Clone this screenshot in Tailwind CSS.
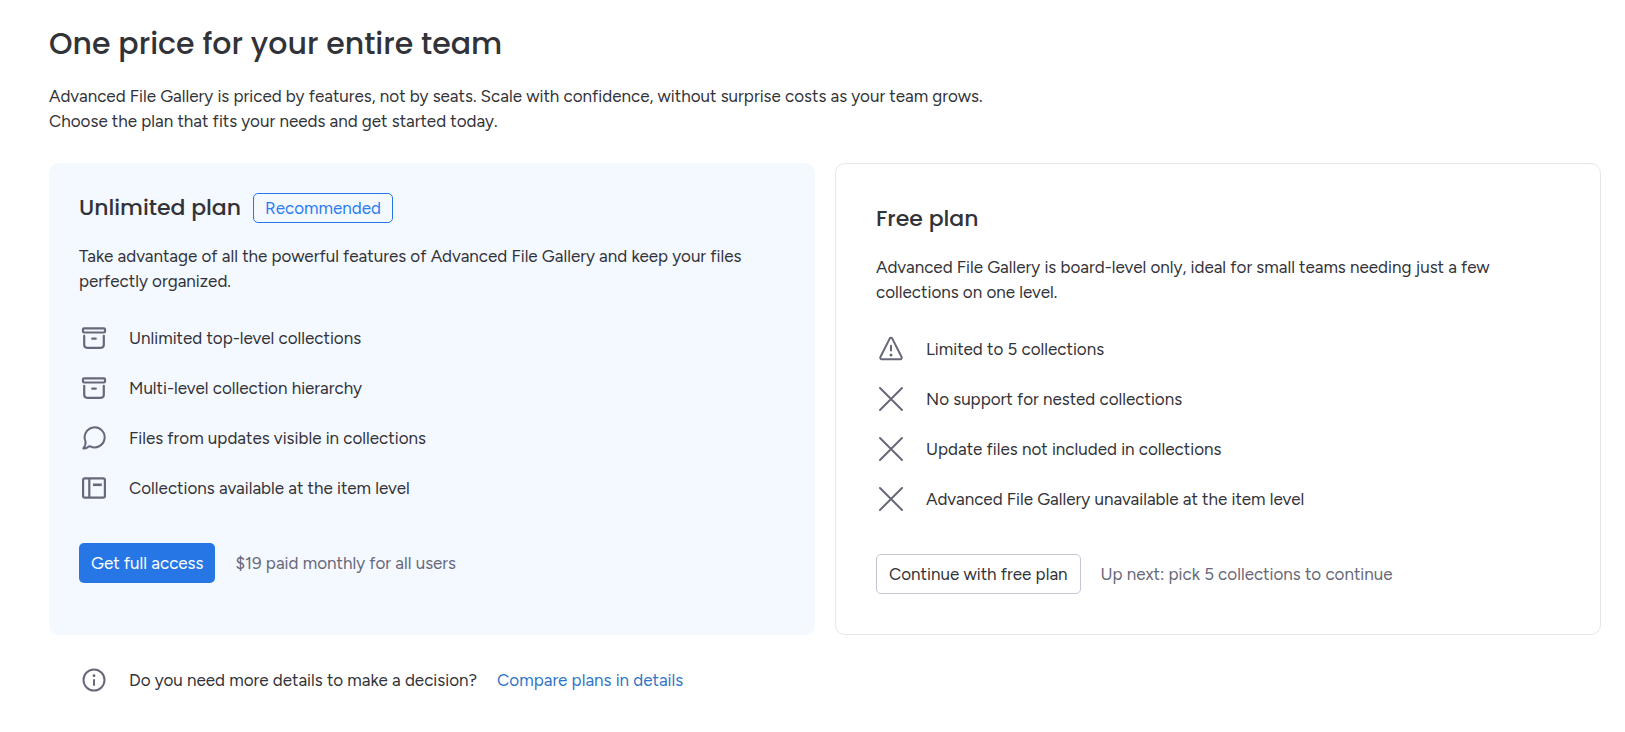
<!DOCTYPE html>
<html lang="en">
<head>
  <meta charset="UTF-8" />
  <meta name="viewport" content="width=device-width, initial-scale=1.0" />
  <title>Advanced File Gallery - Pricing</title>
  <script src="https://cdn.jsdelivr.net/npm/@tailwindcss/browser@4"></script>
</head>
<body class="bg-white font-[Figtree,Lato,sans-serif] text-[17px] leading-[25px] text-[#323338]">
  <!-- icon shapes shared by the lists -->
  <svg class="hidden">
    <symbol id="icon-archive" viewBox="0 0 30 30" stroke-width="2.200">
      <rect x="4" y="5.300" width="22" height="4.200" rx="1" />
      <path d="M5.200 12.800v9a3 3 0 0 0 3 3h13.600a3 3 0 0 0 3-3v-9M13.200 15.700h3.600" />
    </symbol>
    <symbol id="icon-chat" viewBox="0 0 30 30">
      <path d="M6.500 18.400A10 10 0 1 1 11.200 23.300C10 22.900 9.300 23.800 8.500 24.400C7.300 25.200 5.800 25.600 4.300 25.400C6 23.500 6.900 21 6.500 18.400Z" />
    </symbol>
    <symbol id="icon-layout" viewBox="0 0 30 30" stroke-width="2.200">
      <rect x="4.100" y="5.300" width="21.800" height="19.400" rx="1.700" />
      <path d="M10.300 5.300v19.400" />
      <path stroke-width="2.600" d="M14 11.800h8.800" />
    </symbol>
    <symbol id="icon-alert" viewBox="0 0 30 30">
      <path d="M13.700 4.600 4.400 23a1.500 1.500 0 0 0 1.300 2.200h18.600a1.500 1.500 0 0 0 1.300-2.200L16.300 4.600a1.500 1.500 0 0 0-2.600 0ZM15 11.800v4.600" />
      <circle cx="15" cy="20.900" r="1.500" stroke="none" fill="currentColor" />
    </symbol>
    <symbol id="icon-close" viewBox="0 0 30 30">
      <path d="m4 4 22 22M26 4 4 26" />
    </symbol>
    <symbol id="icon-info" viewBox="0 0 30 30">
      <circle cx="15" cy="15" r="10.500" />
      <path d="M15 15v5" />
      <circle cx="15" cy="10.700" r="1.400" stroke="none" fill="currentColor" />
    </symbol>
  </svg>

  <main class="pl-[49px] pr-6 pt-6 pb-8">
    <h1 class="font-[Poppins,Inter,sans-serif] text-[30px] leading-10 font-medium">One price for your entire team</h1>
    <p class="mt-5">
      Advanced File Gallery is priced by features, not by seats. Scale with confidence, without surprise costs as your team grows.<br />
      Choose the plan that fits your needs and get started today.
    </p>

    <div class="mt-[29px] grid grid-cols-2 gap-5">
      <section class="rounded-[10px] bg-[#f4f8ff] p-[30px]">
        <div class="flex items-center gap-3">
          <h2 class="font-[Poppins,Inter,sans-serif] text-[22px] leading-[30px] font-medium">Unlimited plan</h2>
          <span class="flex h-[30px] items-center rounded-[5px] border border-[#2677e5] px-[11px] text-[#2b7df0]">Recommended</span>
        </div>
        <p class="mt-[21px]">Take advantage of all the powerful features of Advanced File Gallery and keep your files perfectly organized.</p>
        <ul class="mt-[29px] flex flex-col gap-5">
          <li class="flex items-center gap-5">
            <svg class="size-[30px] fill-none stroke-current stroke-2 text-[#676879]" stroke-linecap="round" stroke-linejoin="round"><use href="#icon-archive" /></svg>
            Unlimited top-level collections
          </li>
          <li class="flex items-center gap-5">
            <svg class="size-[30px] fill-none stroke-current stroke-2 text-[#676879]" stroke-linecap="round" stroke-linejoin="round"><use href="#icon-archive" /></svg>
            Multi-level collection hierarchy
          </li>
          <li class="flex items-center gap-5">
            <svg class="size-[30px] fill-none stroke-current stroke-2 text-[#676879]" stroke-linecap="round" stroke-linejoin="round"><use href="#icon-chat" /></svg>
            Files from updates visible in collections
          </li>
          <li class="flex items-center gap-5">
            <svg class="size-[30px] fill-none stroke-current stroke-2 text-[#676879]" stroke-linejoin="round"><use href="#icon-layout" /></svg>
            Collections available at the item level
          </li>
        </ul>
        <div class="mt-10 flex items-center gap-5">
          <button type="button" class="h-10 rounded-[5px] bg-[#2677e5] px-3 text-white">Get full access</button>
          <span class="text-[#676879]">$19 paid monthly for all users</span>
        </div>
      </section>

      <section class="rounded-[10px] border border-[#e6e7ea] p-10">
        <h2 class="font-[Poppins,Inter,sans-serif] text-[22px] leading-[30px] font-medium">Free plan</h2>
        <p class="mt-[21px]">Advanced File Gallery is board-level only, ideal for small teams needing just a few collections on one level.</p>
        <ul class="mt-[29px] flex flex-col gap-5">
          <li class="flex items-center gap-5">
            <svg class="size-[30px] fill-none stroke-current stroke-2 text-[#676879]" stroke-linecap="round" stroke-linejoin="round"><use href="#icon-alert" /></svg>
            Limited to 5 collections
          </li>
          <li class="flex items-center gap-5">
            <svg class="size-[30px] fill-none stroke-current stroke-2 text-[#676879]" stroke-linecap="round"><use href="#icon-close" /></svg>
            No support for nested collections
          </li>
          <li class="flex items-center gap-5">
            <svg class="size-[30px] fill-none stroke-current stroke-2 text-[#676879]" stroke-linecap="round"><use href="#icon-close" /></svg>
            Update files not included in collections
          </li>
          <li class="flex items-center gap-5">
            <svg class="size-[30px] fill-none stroke-current stroke-2 text-[#676879]" stroke-linecap="round"><use href="#icon-close" /></svg>
            Advanced File Gallery unavailable at the item level
          </li>
        </ul>
        <div class="mt-10 flex items-center gap-5">
          <button type="button" class="h-10 rounded-[5px] border border-[#c3c6d4] px-3">Continue with free plan</button>
          <span class="text-[#676879]">Up next: pick 5 collections to continue</span>
        </div>
      </section>
    </div>

    <div class="mt-[30px] flex items-center gap-5 px-[30px]">
      <svg class="size-[30px] fill-none stroke-current stroke-2 text-[#676879]" stroke-linecap="round"><use href="#icon-info" /></svg>
      <span>Do you need more details to make a decision?</span>
      <a href="#" class="text-[#2f76c8]">Compare plans in details</a>
    </div>
  </main>
</body>
</html>
